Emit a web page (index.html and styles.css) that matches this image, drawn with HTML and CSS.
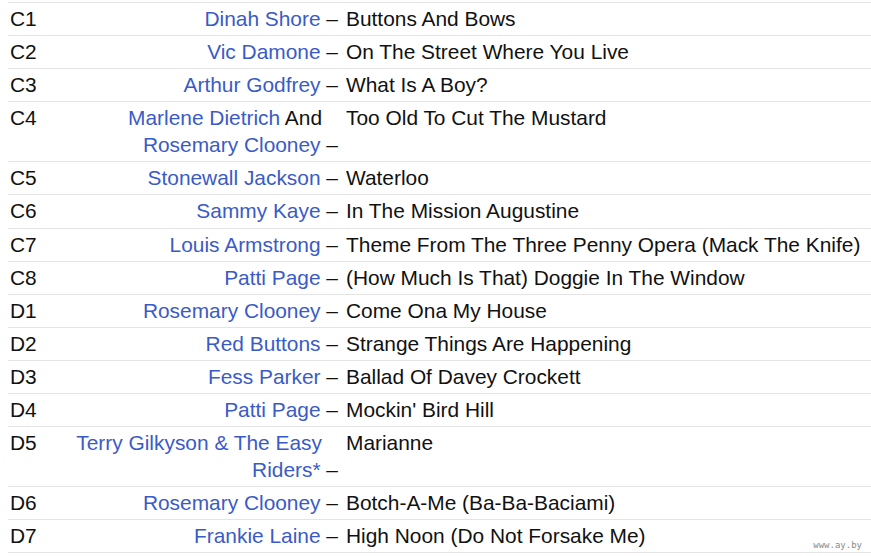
FILE: index.html
```html
<!DOCTYPE html>
<html>
<head>
<meta charset="utf-8">
<link rel="stylesheet" href="styles.css">
</head>
<body>
<div class="tracklist">
  <div class="row"><div class="pos">C1</div><div class="artist"><a>Dinah Shore</a><span class="dash"> –</span></div><div class="title">Buttons And Bows</div></div>
  <div class="row"><div class="pos">C2</div><div class="artist"><a>Vic Damone</a><span class="dash"> –</span></div><div class="title">On The Street Where You Live</div></div>
  <div class="row"><div class="pos">C3</div><div class="artist"><a>Arthur Godfrey</a><span class="dash"> –</span></div><div class="title">What Is A Boy?</div></div>
  <div class="row"><div class="pos">C4</div><div class="artist"><a>Marlene Dietrich</a> And <a>Rosemary Clooney</a><span class="dash"> –</span></div><div class="title">Too Old To Cut The Mustard</div></div>
  <div class="row"><div class="pos">C5</div><div class="artist"><a>Stonewall Jackson</a><span class="dash"> –</span></div><div class="title">Waterloo</div></div>
  <div class="row"><div class="pos">C6</div><div class="artist"><a>Sammy Kaye</a><span class="dash"> –</span></div><div class="title">In The Mission Augustine</div></div>
  <div class="row"><div class="pos">C7</div><div class="artist"><a>Louis Armstrong</a><span class="dash"> –</span></div><div class="title">Theme From The Three Penny Opera (Mack The Knife)</div></div>
  <div class="row"><div class="pos">C8</div><div class="artist"><a>Patti Page</a><span class="dash"> –</span></div><div class="title">(How Much Is That) Doggie In The Window</div></div>
  <div class="row"><div class="pos">D1</div><div class="artist"><a>Rosemary Clooney</a><span class="dash"> –</span></div><div class="title">Come Ona My House</div></div>
  <div class="row"><div class="pos">D2</div><div class="artist"><a>Red Buttons</a><span class="dash"> –</span></div><div class="title">Strange Things Are Happening</div></div>
  <div class="row"><div class="pos">D3</div><div class="artist"><a>Fess Parker</a><span class="dash"> –</span></div><div class="title">Ballad Of Davey Crockett</div></div>
  <div class="row"><div class="pos">D4</div><div class="artist"><a>Patti Page</a><span class="dash"> –</span></div><div class="title">Mockin' Bird Hill</div></div>
  <div class="row"><div class="pos">D5</div><div class="artist"><a>Terry Gilkyson &amp; The Easy Riders*</a><span class="dash"> –</span></div><div class="title">Marianne</div></div>
  <div class="row"><div class="pos">D6</div><div class="artist"><a>Rosemary Clooney</a><span class="dash"> –</span></div><div class="title">Botch-A-Me (Ba-Ba-Baciami)</div></div>
  <div class="row"><div class="pos">D7</div><div class="artist"><a>Frankie Laine</a><span class="dash"> –</span></div><div class="title">High Noon (Do Not Forsake Me)</div></div>
</div>
<div class="watermark">www.ay.by</div>
</body>
</html>
```

FILE: styles.css
```css
html, body {
  margin: 0;
  padding: 0;
  background: #fff;
  overflow: hidden;
}
body {
  font-family: "Liberation Sans", Arial, sans-serif;
  font-size: 20.9px;
  color: #111;
  width: 871px;
  height: 556px;
  position: relative;
}
.tracklist {
  margin: 2px 0 0 8px;
  border-top: 1px solid #e4e4e4;
}
.row {
  display: grid;
  grid-template-columns: 52px 270px 1fr;
  column-gap: 8px;
  border-bottom: 1px solid #e4e4e4;
  padding: 2px 0 3px;
  line-height: 27.08px;
}
.pos {
  padding-left: 2px;
}
.artist {
  text-align: right;
  padding-right: 16px;
}
.artist a {
  color: #3a5bc7;
  text-decoration: none;
}
.dash {
  margin-right: -16px;
}
.title {
  white-space: nowrap;
}
.watermark {
  position: absolute;
  right: 9px;
  bottom: 6px;
  font-family: "DejaVu Sans Mono", monospace;
  font-size: 9px;
  color: #8a8a8a;
}
```
